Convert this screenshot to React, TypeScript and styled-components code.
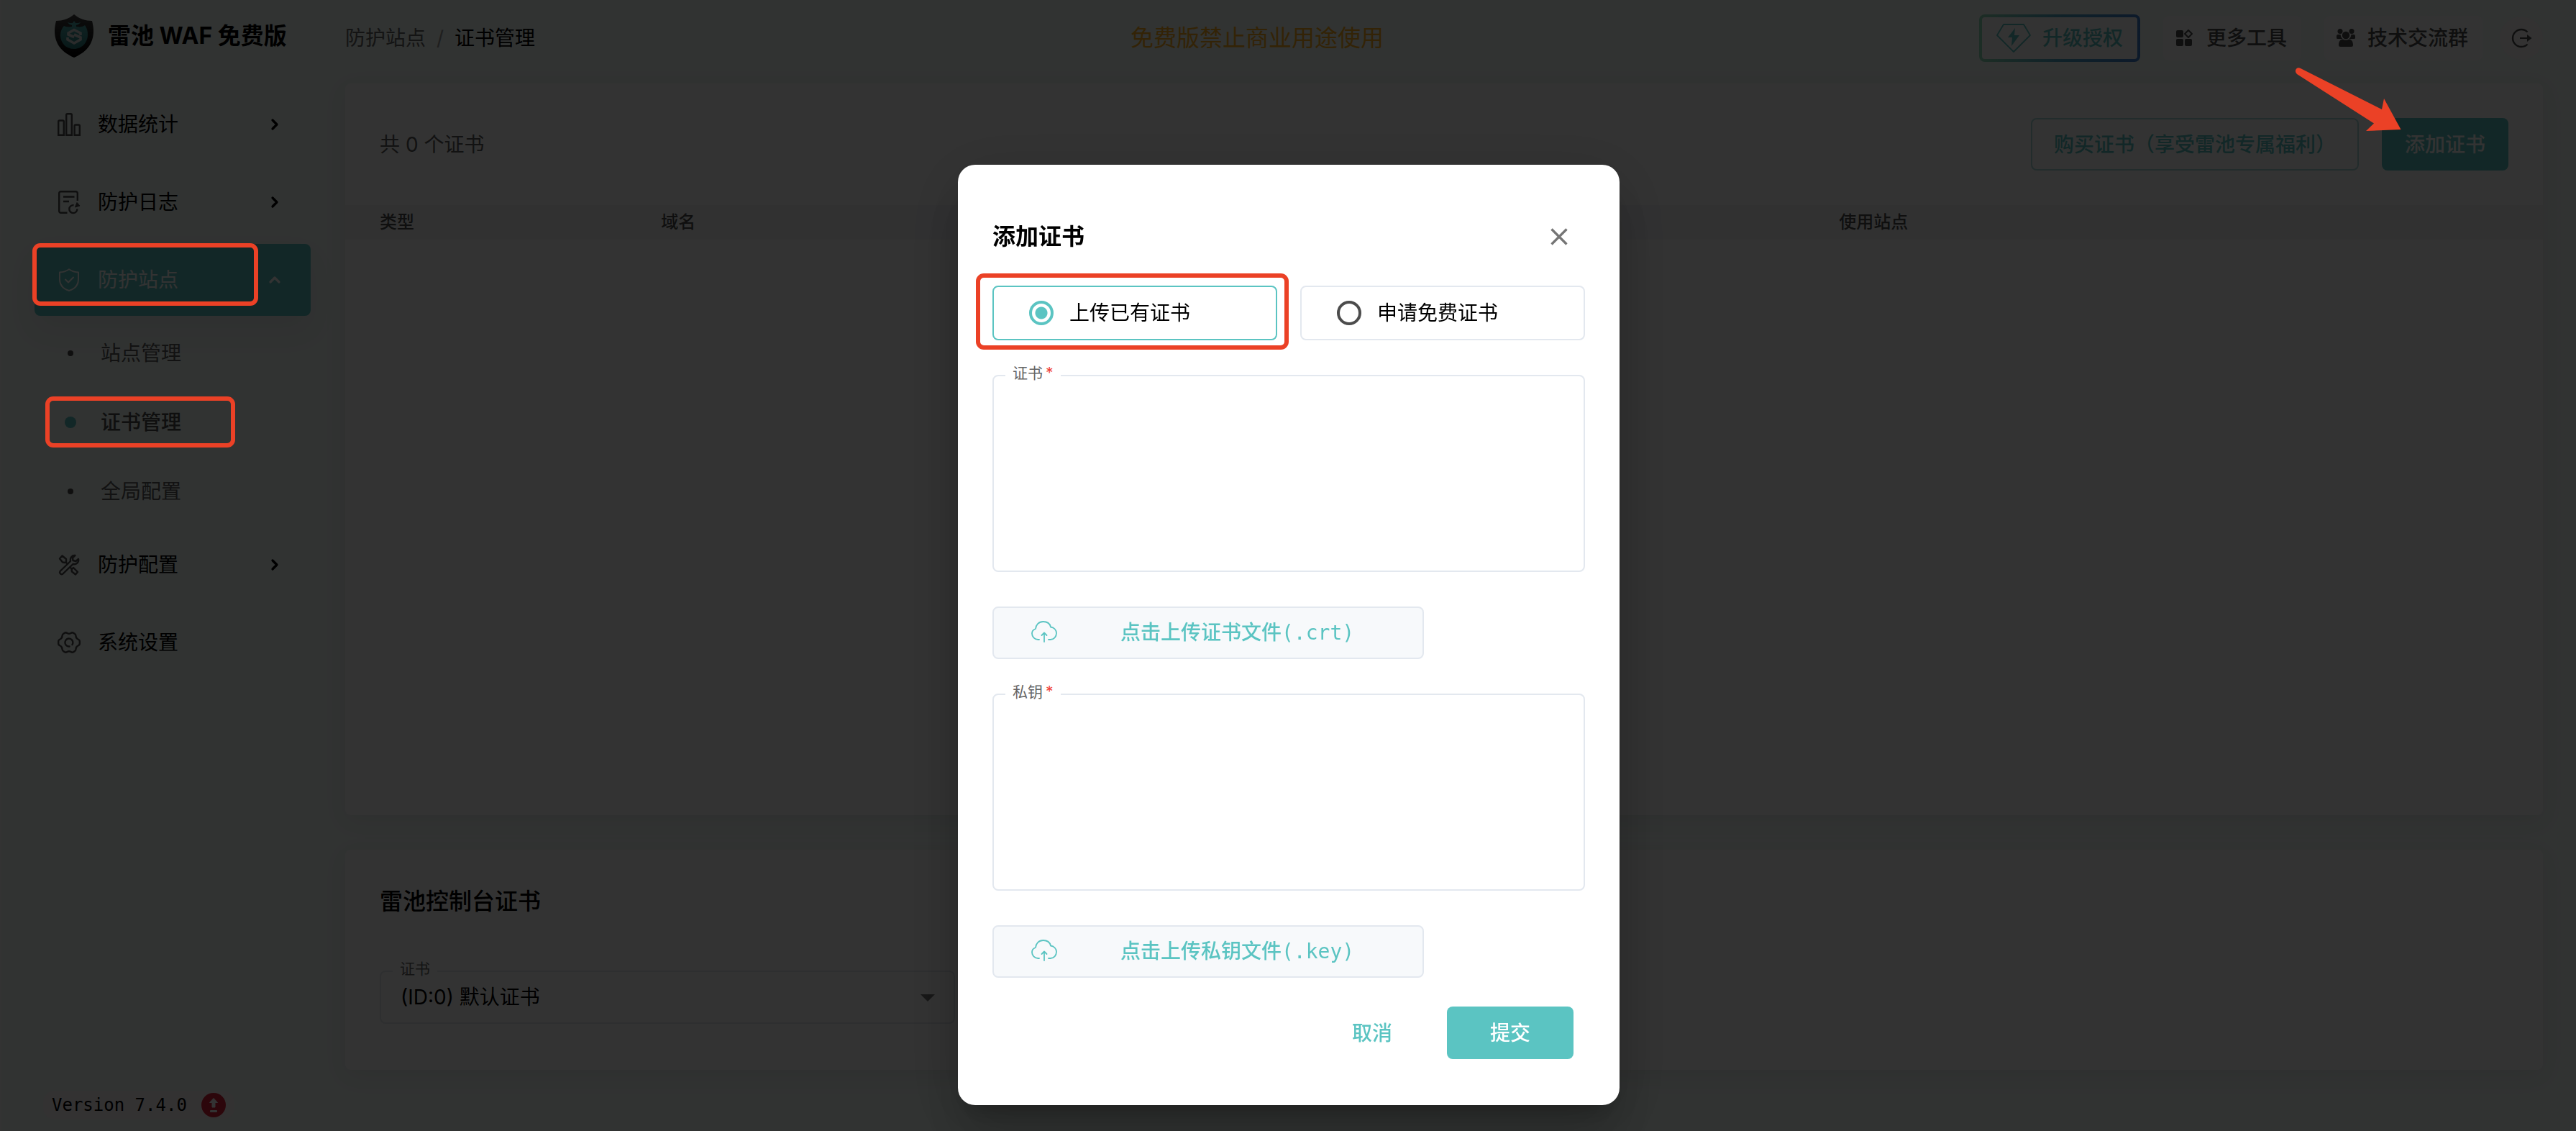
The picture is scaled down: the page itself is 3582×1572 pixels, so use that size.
import React, { useState } from 'react';
import styled, { createGlobalStyle } from 'styled-components';

const teal = '#5bc4c2';
const line = '#e3e8ef';
const markRed = '#eb4126';
const sans = 'Inter, "Noto Sans CJK SC", "Noto Sans", sans-serif';
const mono = '"DejaVu Sans Mono", "Noto Sans CJK SC", monospace';

const GlobalStyle = createGlobalStyle`
  *, *::before, *::after { box-sizing: border-box; }
  body {
    margin: 0;
    background: #f3fcf8;
    color: #000;
    font-family: ${sans};
    font-size: 28px;
    line-height: 48px;
  }
  button, select, textarea, input { font: inherit; color: inherit; }
  button { border: 0; background: none; padding: 0; cursor: pointer; }
  a { color: inherit; text-decoration: none; }
  svg { display: block; flex: none; overflow: visible; }
`;

const Page = styled.div`
  display: grid;
  grid-template-columns: 480px minmax(0, 1fr);
  min-height: 100vh;
`;

/* ---------- sidebar ---------- */

const Sidebar = styled.aside`
  display: flex;
  flex-direction: column;
  padding: 0 48px 16px;
  box-shadow: inset 2px 0 #fff;
`;

const Brand = styled.div`
  display: flex;
  align-items: center;
  gap: 20px;
  height: 100px;
  margin-bottom: 23px;
  padding-left: 28px;
  font-size: 32px;
  font-weight: 700;
`;

const Nav = styled.nav`
  display: flex;
  flex-direction: column;
  gap: 8px;
`;

const NavItem = styled.button<{ $active?: boolean }>`
  display: flex;
  align-items: center;
  gap: 24px;
  width: 100%;
  height: 100px;
  padding: 0 32px;
  border-radius: 8px;
  text-align: left;
  color: ${p => (p.$active ? '#fff' : '#000')};
  background: ${p => (p.$active ? teal : 'transparent')};
  box-shadow: ${p => (p.$active ? '0 20px 40px rgba(90, 30, 90, 0.07)' : 'none')};
`;

const NavIcon = styled.span<{ $active?: boolean }>`
  color: ${p => (p.$active ? '#fff' : '#4c4c4c')};
`;

const NavLabel = styled.span`
  flex: 1;
`;

const SubNav = styled.ul`
  list-style: none;
  margin: -4px 0;
  padding: 0;
`;

const SubLink = styled.a<{ $active?: boolean }>`
  display: flex;
  align-items: center;
  height: 96px;
  gap: ${p => (p.$active ? 34 : 38)}px;
  padding-left: ${p => (p.$active ? 42 : 46)}px;
  font-weight: ${p => (p.$active ? 500 : 400)};
  color: ${p => (p.$active ? '#4c4c4c' : '#5c5c5c')};

  &::before {
    content: '';
    width: ${p => (p.$active ? 16 : 8)}px;
    height: ${p => (p.$active ? 16 : 8)}px;
    border-radius: 50%;
    background: ${p => (p.$active ? teal : '#4c4c4c')};
  }
`;

const Version = styled.div`
  display: flex;
  align-items: center;
  gap: 20px;
  align-self: flex-start;
  margin-top: auto;
  margin-left: 12px;
  padding: 0 12px;
  height: 40px;
  border-radius: 16px;
  background: #fcf8f9;
  font-family: ${mono};
  font-size: 24px;
`;

/* ---------- main column ---------- */

const Main = styled.main`
  display: flex;
  flex-direction: column;
  min-width: 0;
  padding: 0 46px 85px 0;
`;

const Header = styled.header`
  display: flex;
  align-items: center;
  justify-content: space-between;
  height: 106px;
  margin-bottom: 10px;
`;

const Breadcrumb = styled.nav`
  display: flex;
  gap: 15px;
`;

const CrumbLink = styled.a`
  color: #666;
`;

const CrumbSlash = styled.span`
  color: #999;
`;

const Notice = styled.div`
  font-size: 32px;
  color: #ffb020;
`;

const HeaderActions = styled.div`
  display: flex;
  align-items: center;
  gap: 32px;
`;

const UpgradeButton = styled.button`
  display: flex;
  align-items: center;
  gap: 16px;
  height: 66px;
  padding: 0 20px;
  border: 4px solid transparent;
  border-radius: 8px;
  background:
    linear-gradient(#fff, #fff) padding-box,
    linear-gradient(90deg, #8fe0b8, #4fa8c8 50%, #3f7fd0) border-box;
  color: ${teal};
  font-weight: 500;
`;

const ToolButton = styled.button`
  display: flex;
  align-items: center;
  gap: 18px;
  height: 62px;
  padding: 0 20px 0 18px;
  border-radius: 8px;
  background: #fff;
  color: #4c4c4c;
  font-weight: 500;
`;

const RoundButton = styled.button`
  display: grid;
  place-items: center;
  width: 60px;
  height: 60px;
  margin-left: -8px;
  border-radius: 50%;
  background: #fcf9f9;
  color: #4c4c4c;
`;

const Card = styled.section<{ $grow?: boolean }>`
  flex: ${p => (p.$grow ? '1 0 auto' : '0 0 auto')};
  border-radius: 8px;
  background: #fff;
  box-shadow: 0 8px 32px rgba(70, 10, 50, 0.07);

  & + & { margin-top: 48px; }
`;

const CardBar = styled.div`
  display: flex;
  align-items: center;
  justify-content: space-between;
  padding: 48px;
`;

const Count = styled.span`
  color: #5c5c5c;
`;

const ButtonRow = styled.div`
  display: flex;
  gap: 32px;
`;

const Button = styled.button<{ $kind: 'solid' | 'outline' | 'text'; $wide?: boolean }>`
  height: 73px;
  min-width: ${p => (p.$wide ? '176px' : '0')};
  padding: 0 ${p => (p.$kind === 'outline' ? 30 : 32)}px;
  border: ${p => (p.$kind === 'outline' ? '2px solid #a8dcdc' : '0')};
  border-radius: 8px;
  background: ${p => (p.$kind === 'solid' ? teal : 'transparent')};
  color: ${p => (p.$kind === 'solid' ? '#fff' : teal)};
  font-weight: 500;
`;

const Table = styled.table`
  width: 100%;
  table-layout: fixed;
  border-collapse: collapse;
`;

const Th = styled.th<{ $width?: string }>`
  width: ${p => p.$width ?? 'auto'};
  height: 48px;
  padding: 0 48px;
  background: #f5f5f6;
  color: #4c4c4c;
  font-size: 24px;
  line-height: 48px;
  font-weight: 500;
  text-align: left;
`;

const ConsoleBody = styled.div`
  padding: 48px 48px 64px;
`;

const CardTitle = styled.h2`
  margin: 0 0 72px;
  font-size: 32px;
  line-height: 48px;
  font-weight: 500;
`;

const Field = styled.div<{ $width?: number }>`
  position: relative;
  width: ${p => (p.$width ? `${p.$width}px` : '100%')};
  max-width: 100%;
`;

const FieldLabel = styled.label`
  position: absolute;
  top: -16px;
  left: 18px;
  display: flex;
  gap: 4px;
  padding: 0 10px;
  background: #fff;
  color: #666;
  font-size: 21px;
  line-height: 28px;
`;

const Star = styled.span`
  color: #f04438;
`;

const Select = styled.select`
  display: block;
  width: 100%;
  height: 74px;
  padding: 0 28px 0 27px;
  border: 2px solid ${line};
  border-radius: 8px;
  background: transparent;
  appearance: none;
`;

const Caret = styled.span`
  position: absolute;
  top: 33px;
  right: 28px;
  border: 10px solid transparent;
  border-top-color: #757575;
  border-bottom: 0;
  pointer-events: none;
`;

/* ---------- dialog ---------- */

const Backdrop = styled.div`
  position: fixed;
  inset: 0;
  display: flex;
  align-items: flex-start;
  justify-content: center;
  padding: 229px 32px 36px 34px;
  background: rgba(0, 0, 0, 0.8);
`;

const Dialog = styled.form`
  width: 920px;
  max-width: 100%;
  padding: 64px 48px;
  border-radius: 24px;
  background: #fff;
  box-shadow:
    0 22px 30px -14px rgba(0, 0, 0, 0.2),
    0 48px 76px 6px rgba(0, 0, 0, 0.14),
    0 18px 92px 16px rgba(0, 0, 0, 0.12);
`;

const DialogHead = styled.div`
  display: flex;
  align-items: center;
  justify-content: space-between;
  margin-bottom: 32px;
`;

const DialogTitle = styled.h1`
  margin: 0;
  font-size: 32px;
  line-height: 48px;
  font-weight: 700;
`;

const CloseButton = styled.button`
  display: grid;
  place-items: center;
  width: 72px;
  height: 72px;
  color: #757575;
`;

const Stack = styled.div`
  display: flex;
  flex-direction: column;
  gap: 48px;
`;

const RadioRow = styled.div`
  display: grid;
  grid-template-columns: 1fr 1fr;
  gap: 32px;
`;

const RadioCard = styled.label<{ $on: boolean }>`
  display: flex;
  align-items: center;
  gap: 22px;
  height: 76px;
  padding-left: 49px;
  border: 2px solid ${p => (p.$on ? teal : line)};
  border-radius: 8px;
  cursor: pointer;
`;

const Radio = styled.input`
  appearance: none;
  flex: none;
  width: 34px;
  height: 34px;
  margin: 0;
  border: 4px solid #4c4c4c;
  border-radius: 50%;

  &:checked {
    border-color: ${teal};
    background: radial-gradient(circle, ${teal} 8px, transparent 9px);
  }
`;

const TextArea = styled.textarea`
  display: block;
  width: 100%;
  height: 274px;
  padding: 28px;
  border: 2px solid ${line};
  border-radius: 8px;
  background: transparent;
  resize: none;
  outline: none;
`;

const UploadButton = styled.button`
  display: flex;
  align-items: center;
  width: 600px;
  max-width: 100%;
  height: 73px;
  padding: 0 52px;
  gap: 88px;
  border: 2px solid ${line};
  border-radius: 8px;
  background: #f7f9fb;
  color: ${teal};
  font-family: ${mono};
  font-weight: 500;
`;

const DialogActions = styled.div`
  display: flex;
  justify-content: flex-end;
  gap: 16px;
  margin-top: 40px;
  padding-right: 16px;
`;

/* ---------- annotations drawn over everything ---------- */

const MarkLayer = styled.div`
  position: fixed;
  inset: 0;
  pointer-events: none;
`;

const MarkBox = styled.div<{ $x: string; $y: number; $w: number; $h: number }>`
  position: absolute;
  left: ${p => p.$x};
  top: ${p => p.$y}px;
  width: ${p => p.$w}px;
  height: ${p => p.$h}px;
  border: 6px solid ${markRed};
  border-radius: 11px;
`;

const MarkArrow = styled.svg`
  position: absolute;
  top: 90px;
  right: 242px;
`;

/* ---------- icons ---------- */

const stroke = {
  fill: 'none',
  stroke: 'currentColor',
  strokeWidth: 2.4,
  strokeLinecap: 'round' as const,
  strokeLinejoin: 'round' as const,
};

const ShieldLogo = () => (
  <svg width="54" height="60" viewBox="0 0 54 60">
    <defs>
      <linearGradient id="shieldFill" x1="0" y1="0" x2="0" y2="1">
        <stop offset="0" stopColor="#444" />
        <stop offset="1" stopColor="#000" />
      </linearGradient>
      <linearGradient id="ballFill" x1="0" y1="0" x2="0" y2="1">
        <stop offset="0" stopColor="#4fb0b0" />
        <stop offset="1" stopColor="#2c7a7a" />
      </linearGradient>
    </defs>
    <path d="M27 0C34 6 43 9 52 9C53 13 54 18 54 23C54 42 43 53 27 60C11 53 0 42 0 23C0 18 1 13 2 9C11 9 20 6 27 0Z" fill="url(#shieldFill)" />
    <path d="M27 9l2 3c3 0 5 0 7-1c-1 2-3 3-6 4l0 2c6 1 10 0 12-2c3 4 4 8 4 13c0 11-8 20-19 20S8 40 8 29c0-5 2-10 5-13c2 1 6 2 11 1v-2c-3-1-5-2-6-4c2 1 4 1 7 1z" fill="url(#ballFill)" />
    <path d="M36 29V26L27 21.500L19 26V28L27 31.500" fill="none" stroke="#d8d8d8" strokeWidth="3.600" />
    <path d="M27 28L36 32V35L27 40L18 35V32" fill="none" stroke="#d8d8d8" strokeWidth="3.600" />
  </svg>
);

const ChartIcon = () => (
  <svg width="32" height="32" viewBox="0 0 32 32" {...stroke} strokeLinecap="butt" strokeLinejoin="miter">
    <path d="M1.2 30.8V12a1.5 1.5 0 0 1 1.5-1.5h4.6A1.5 1.5 0 0 1 8.8 12v18.8zM12.2 30.8V2.7a1.5 1.5 0 0 1 1.5-1.5h4.6a1.5 1.5 0 0 1 1.5 1.5v28.1zM23.6 30.8V18a1.5 1.5 0 0 1 1.5-1.5h4.2a1.5 1.5 0 0 1 1.5 1.5v12.8z" />
  </svg>
);

const LogIcon = () => (
  <svg width="32" height="32" viewBox="0 0 32 32" {...stroke} strokeLinecap="butt">
    <path d="M13.500 30.800H4.500a2.300 2.300 0 0 1-2.300-2.300V3.500a2.300 2.300 0 0 1 2.300-2.300H25.500a2.300 2.300 0 0 1 2.300 2.300V14" />
    <path d="M8 8.500H23.500M8 15H16" />
    <path d="M22.500 20.200a5.500 5.500 0 1 0 4.800 5.200" />
    <path d="M27 16.500L31 21L24.500 23Z" fill="currentColor" strokeWidth="1" />
  </svg>
);

const ShieldIcon = () => (
  <svg width="32" height="32" viewBox="0 0 32 32" {...stroke} strokeWidth={2}>
    <path d="M16 1.200C20 4 24.500 5.300 29 5.500V15C29 23 24 28.500 16 31C8 28.500 3 23 3 15V5.500C7.500 5.300 12 4 16 1.200Z" />
    <path d="M11 15.500L15 19.500L22 12.500" />
  </svg>
);

const ToolsIcon = () => (
  <svg width="32" height="32" viewBox="0 0 32 32" {...stroke}>
    <path d="M3 7.500L6.500 3.500L12 8V12L10.500 13L7 12.500ZM11.500 12.500L14 15" />
    <path d="M24.500 3C20.500 2.500 17 6 18 11L3.500 25A2.800 2.800 0 0 0 7 29L21.500 15C26 16 30 12.500 29 8L25.500 11L21.500 10L21 6.500Z" />
    <path d="M17.500 19.500L19.500 21.500M19.500 22.500L22 20L28 26L25 29.500L20 25.500Z" />
  </svg>
);

const GearIcon = () => (
  <svg width="32" height="32" viewBox="0 0 32 32" {...stroke}>
    <path d="M9.500 3Q11.500 1.500 13.500 3Q16 4.500 18.500 3Q20.500 1.500 22.500 3L24 4Q25.500 5 25.500 7Q25.500 10 28.500 11.500Q30.800 12.500 30.800 14.500V17.500Q30.800 19.500 28.500 20.500Q25.500 22 25.500 25Q25.500 27 24 28L22.500 29Q20.500 30.500 18.500 29Q16 27.500 13.500 29Q11.500 30.500 9.500 29L8 28Q6.500 27 6.500 25Q6.500 22 3.500 20.500Q1.200 19.500 1.200 17.500V14.500Q1.200 12.500 3.500 11.500Q6.500 10 6.500 7Q6.500 5 8 4Z" />
    <path d="M16.500 21.500A5.500 5.500 0 1 1 20.500 19" />
  </svg>
);

const Chevron = ({ up }: { up?: boolean }) => (
  <svg width="36" height="36" viewBox="0 0 36 36" {...stroke} strokeWidth={3.2}>
    <path d={up ? 'M12 21L18 15L24 21' : 'M15 12L21 18L15 24'} />
  </svg>
);

const UpdateBadge = () => (
  <svg width="34" height="34" viewBox="0 0 34 34">
    <circle cx="17" cy="17" r="17" fill="#dc2238" />
    <path d="M17 7.500L22.500 13.500H19V20H15V13.500H11.500Z" fill="#fff" stroke="#fff" strokeLinejoin="round" />
    <rect x="12" y="24" width="10" height="3" rx="1" fill="#fff" />
  </svg>
);

const DiamondIcon = () => (
  <svg width="48" height="40" viewBox="0 0 48 40">
    <path d="M10 1H38L47 16L24 39L1 16Z" fill="none" stroke={teal} strokeWidth="1.8" strokeLinejoin="round" />
    <path d="M26 6L16 19H22L21 31L32 16H25Z" fill={teal} />
  </svg>
);

const GridIcon = () => (
  <svg width="24" height="24" viewBox="0 0 24 24" fill="currentColor">
    <rect x="0" y="1" width="10" height="10" rx="2" />
    <rect x="0" y="13" width="10" height="10" rx="2" />
    <rect x="12" y="13" width="10" height="10" rx="2" />
    <path d="M17 1L22 6L17 11L12 6Z" fill="none" stroke="currentColor" strokeWidth="2" strokeLinejoin="round" />
  </svg>
);

const PeopleIcon = () => (
  <svg width="24" height="26" viewBox="1 0 24 26" fill="currentColor">
    <circle cx="5" cy="3.500" r="3.500" />
    <circle cx="21" cy="3.500" r="3.500" />
    <circle cx="13" cy="9" r="5.200" />
    <path d="M2 8H5.500C6 11 7 13 8.500 14H1.500A1.500 1.500 0 0 1 0 12.500V10A2 2 0 0 1 2 8ZM24 8H20.500C20 11 19 13 17.500 14H24.500A1.500 1.500 0 0 0 26 12.500V10A2 2 0 0 0 24 8Z" />
    <path d="M8.500 14.500Q13 17 17.500 14.500C21 15 23 18 23 22.500A2.500 2.500 0 0 1 20.500 25H5.500A2.500 2.500 0 0 1 3 22.500C3 18 5 15 8.500 14.500Z" />
  </svg>
);

const LogoutIcon = () => (
  <svg width="28" height="26" viewBox="0 0 28 26">
    <path d="M22.500 4.500A12 12 0 1 0 22.500 21.500" fill="none" stroke="currentColor" strokeWidth="2.400" />
    <path d="M12 12H22V8L28.500 13L22 18V14H12Z" fill="currentColor" />
  </svg>
);

const CloseIcon = () => (
  <svg width="24" height="24" viewBox="0 0 24 24" fill="none" stroke="currentColor" strokeWidth="3.200">
    <path d="M1.500 1.500L22.500 22.500M22.500 1.500L1.500 22.500" />
  </svg>
);

const CloudIcon = () => (
  <svg width="36" height="30" viewBox="0 2 36 30" {...stroke} strokeWidth={1.800}>
    <path d="M11 26H9.500C4.500 26 1 22 1 17.500C1 14.500 3 12 6 11C6.500 5.500 10.500 1 16.500 1C22 1 26 4 27 8.500C31.500 9 35 12.500 35 17C35 22 31.500 26 26.500 26H24" />
    <path d="M18 29V16.500M14.500 20L18 16.500L21.500 20" />
  </svg>
);

/* ---------- page ---------- */

type Mode = 'upload' | 'free';

const modes: { id: Mode; label: string }[] = [
  { id: 'upload', label: '上传已有证书' },
  { id: 'free', label: '申请免费证书' },
];

const uploads = [
  { id: 'crt', label: '证书', button: '点击上传证书文件(.crt)' },
  { id: 'key', label: '私钥', button: '点击上传私钥文件(.key)' },
];

const siteLinks = ['站点管理', '证书管理', '全局配置'];

export default function App() {
  const [mode, setMode] = useState<Mode>('upload');

  return (
    <>
      <GlobalStyle />
      <Page>
        <Sidebar>
          <Brand>
            <ShieldLogo />
            <span>雷池 WAF 免费版</span>
          </Brand>
          <Nav>
            <NavItem type="button">
              <NavIcon><ChartIcon /></NavIcon>
              <NavLabel>数据统计</NavLabel>
              <Chevron />
            </NavItem>
            <NavItem type="button">
              <NavIcon><LogIcon /></NavIcon>
              <NavLabel>防护日志</NavLabel>
              <Chevron />
            </NavItem>
            <NavItem type="button" $active>
              <NavIcon $active><ShieldIcon /></NavIcon>
              <NavLabel>防护站点</NavLabel>
              <Chevron up />
            </NavItem>
            <SubNav>
              {siteLinks.map(name => (
                <li key={name}>
                  <SubLink href="#" $active={name === '证书管理'}>{name}</SubLink>
                </li>
              ))}
            </SubNav>
            <NavItem type="button">
              <NavIcon><ToolsIcon /></NavIcon>
              <NavLabel>防护配置</NavLabel>
              <Chevron />
            </NavItem>
            <NavItem type="button">
              <NavIcon><GearIcon /></NavIcon>
              <NavLabel>系统设置</NavLabel>
            </NavItem>
          </Nav>
          <Version>
            <span>Version 7.4.0</span>
            <UpdateBadge />
          </Version>
        </Sidebar>

        <Main>
          <Header>
            <Breadcrumb>
              <CrumbLink href="#">防护站点</CrumbLink>
              <CrumbSlash>/</CrumbSlash>
              <span>证书管理</span>
            </Breadcrumb>
            <Notice>免费版禁止商业用途使用</Notice>
            <HeaderActions>
              <UpgradeButton type="button">
                <DiamondIcon />
                升级授权
              </UpgradeButton>
              <ToolButton type="button">
                <GridIcon />
                更多工具
              </ToolButton>
              <ToolButton type="button">
                <PeopleIcon />
                技术交流群
              </ToolButton>
              <RoundButton type="button" aria-label="退出">
                <LogoutIcon />
              </RoundButton>
            </HeaderActions>
          </Header>

          <Card $grow>
            <CardBar>
              <Count>共 0 个证书</Count>
              <ButtonRow>
                <Button type="button" $kind="outline">购买证书（享受雷池专属福利）</Button>
                <Button type="button" $kind="solid">添加证书</Button>
              </ButtonRow>
            </CardBar>
            <Table>
              <thead>
                <tr>
                  <Th $width="12.8%">类型</Th>
                  <Th $width="53.6%">域名</Th>
                  <Th>使用站点</Th>
                </tr>
              </thead>
            </Table>
          </Card>

          <Card>
            <ConsoleBody>
              <CardTitle>雷池控制台证书</CardTitle>
              <Field $width={800}>
                <Select id="console-cert" defaultValue="0">
                  <option value="0">(ID:0) 默认证书</option>
                </Select>
                <FieldLabel htmlFor="console-cert">证书</FieldLabel>
                <Caret />
              </Field>
            </ConsoleBody>
          </Card>
        </Main>
      </Page>

      <Backdrop>
        <Dialog role="dialog" aria-labelledby="dialog-title" onSubmit={e => e.preventDefault()}>
          <DialogHead>
            <DialogTitle id="dialog-title">添加证书</DialogTitle>
            <CloseButton type="button" aria-label="关闭">
              <CloseIcon />
            </CloseButton>
          </DialogHead>
          <Stack>
            <RadioRow>
              {modes.map(m => (
                <RadioCard key={m.id} $on={mode === m.id}>
                  <Radio type="radio" name="mode" checked={mode === m.id} onChange={() => setMode(m.id)} />
                  {m.label}
                </RadioCard>
              ))}
            </RadioRow>
            {uploads.map(u => (
              <React.Fragment key={u.id}>
                <Field>
                  <TextArea id={u.id} />
                  <FieldLabel htmlFor={u.id}>
                    {u.label}
                    <Star>*</Star>
                  </FieldLabel>
                </Field>
                <UploadButton type="button">
                  <CloudIcon />
                  {u.button}
                </UploadButton>
              </React.Fragment>
            ))}
          </Stack>
          <DialogActions>
            <Button type="button" $kind="text" $wide>取消</Button>
            <Button type="submit" $kind="solid" $wide>提交</Button>
          </DialogActions>
        </Dialog>
      </Backdrop>

      <MarkLayer>
        <MarkBox $x="45px" $y={338} $w={314} $h={87} />
        <MarkBox $x="63px" $y={551} $w={264} $h={71} />
        <MarkBox $x="calc(50% - 434px)" $y={380} $w={435} $h={106} />
        <MarkArrow width="150" height="96" viewBox="0 0 150 96">
          <path d="M9 5L122 62L125 47L148.500 90L100 92L111 81.500L4 13C-1 8 4 2 9 5Z" fill={markRed} />
        </MarkArrow>
      </MarkLayer>
    </>
  );
}
